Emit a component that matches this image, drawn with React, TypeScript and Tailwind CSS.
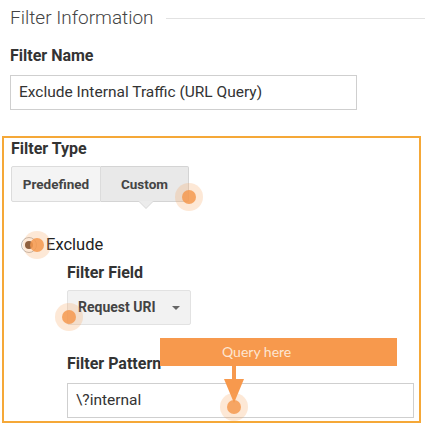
import React from "react";

function Dot({ className }: { className: string }) {
  return (
    <span className={`pointer-events-none absolute flex h-[28px] w-[28px] items-center justify-center rounded-full bg-[#f7a35c]/25 ${className}`}>
      <span className="h-[14px] w-[14px] rounded-full bg-[#f5994f]/85" />
    </span>
  );
}

export default function App() {
  return (
    <div className="relative h-[430px] w-[425px] overflow-hidden bg-white font-['Roboto',sans-serif] text-[#333]">
      <div className="flex items-center pl-[10px] pt-[6px]">
        <h2 className="text-[19px] font-light leading-[24px] text-[#444]">Filter Information</h2>
        <div className="ml-[12px] h-px flex-1 bg-[#e2e2e2]" />
      </div>

      <div className="pl-[10px] pt-[17px]">
        <div className="text-[16px] font-bold leading-[18px] text-[#333]">Filter Name</div>
        <div className="mt-[10px] flex h-[35px] w-[347px] items-center border border-[#cfcfcf] pl-[8px] text-[15.5px] text-[#333]">
          Exclude Internal Traffic (URL Query)
        </div>
      </div>

      <div className="ml-[2px] mt-[26px] h-[287px] w-[419px] border-2 border-[#f5a838] pl-[7px] pt-[2px]">
        <div className="text-[16px] font-bold leading-[18px] text-[#333]">Filter Type</div>
        <div className="mt-[8px] flex h-[36px]">
          <div className="flex w-[90px] items-center justify-center rounded-l-[2px] border border-[#dcdcdc] bg-[#f4f4f4] text-[13.5px] font-bold text-[#444]">
            Predefined
          </div>
          <div className="relative flex w-[88px] items-center justify-center rounded-r-[2px] border border-l-0 border-[#d4d4d4] bg-[#e9e9e9] text-[13.5px] font-bold text-[#444]">
            Custom
            <span className="absolute left-[37px] top-[34px] h-0 w-0 border-x-[8px] border-t-[8px] border-x-transparent border-t-[#d8d8d8]" />
            <span className="absolute left-[38px] top-[34px] h-0 w-0 border-x-[7px] border-t-[7px] border-x-transparent border-t-[#ececec]" />
          </div>
        </div>

        <div className="mt-[33px] flex items-center pl-[10px]">
          <span className="flex h-[16px] w-[16px] items-center justify-center rounded-full border border-[#bbb] bg-white">
            <span className="h-[8px] w-[8px] rounded-full bg-[#6b4a36]" />
          </span>
          <span className="ml-[9px] text-[16.5px] leading-[20px] text-[#222]">Exclude</span>
        </div>

        <div className="pl-[56px]">
          <div className="mt-[9px] text-[16px] font-bold leading-[18px] text-[#333]">Filter Field</div>
          <div className="mt-[8px] flex h-[35px] w-[124px] items-center rounded-[2px] border border-[#e2e2e2] bg-[#f2f2f2] pl-[10px] text-[14px] font-bold text-[#444]">
            Request URI
            <span className="ml-[16px] mt-[1px] h-0 w-0 border-x-[4px] border-t-[4px] border-x-transparent border-t-[#666]" />
          </div>
          <div className="mt-[30px] text-[16px] font-bold leading-[18px] text-[#333]">Filter Pattern</div>
          <div className="mt-[10px] flex h-[35px] w-[347px] items-center border border-[#cfcfcf] pl-[8px] text-[15.5px] text-[#333]">
            \?internal
          </div>
        </div>
      </div>

      <div className="absolute left-[160px] top-[338px] flex h-[28px] w-[237px] items-center pb-[1px] pl-[62px] font-['Lato',sans-serif] text-[14px] text-[#fde6d2] bg-[#f7994d]">
        Query here
      </div>
      <svg className="pointer-events-none absolute left-[222px] top-[365px]" width="24" height="40" viewBox="0 0 24 40">
        <rect x="10" y="0" width="4" height="18" fill="#f7994d" />
        <polygon points="2,14 22,14 12,38" fill="#f7994d" />
      </svg>

      <Dot className="left-[175px] top-[183px]" />
      <Dot className="left-[23px] top-[231px]" />
      <Dot className="left-[55px] top-[303px]" />
      <Dot className="left-[220px] top-[393px]" />
    </div>
  );
}
